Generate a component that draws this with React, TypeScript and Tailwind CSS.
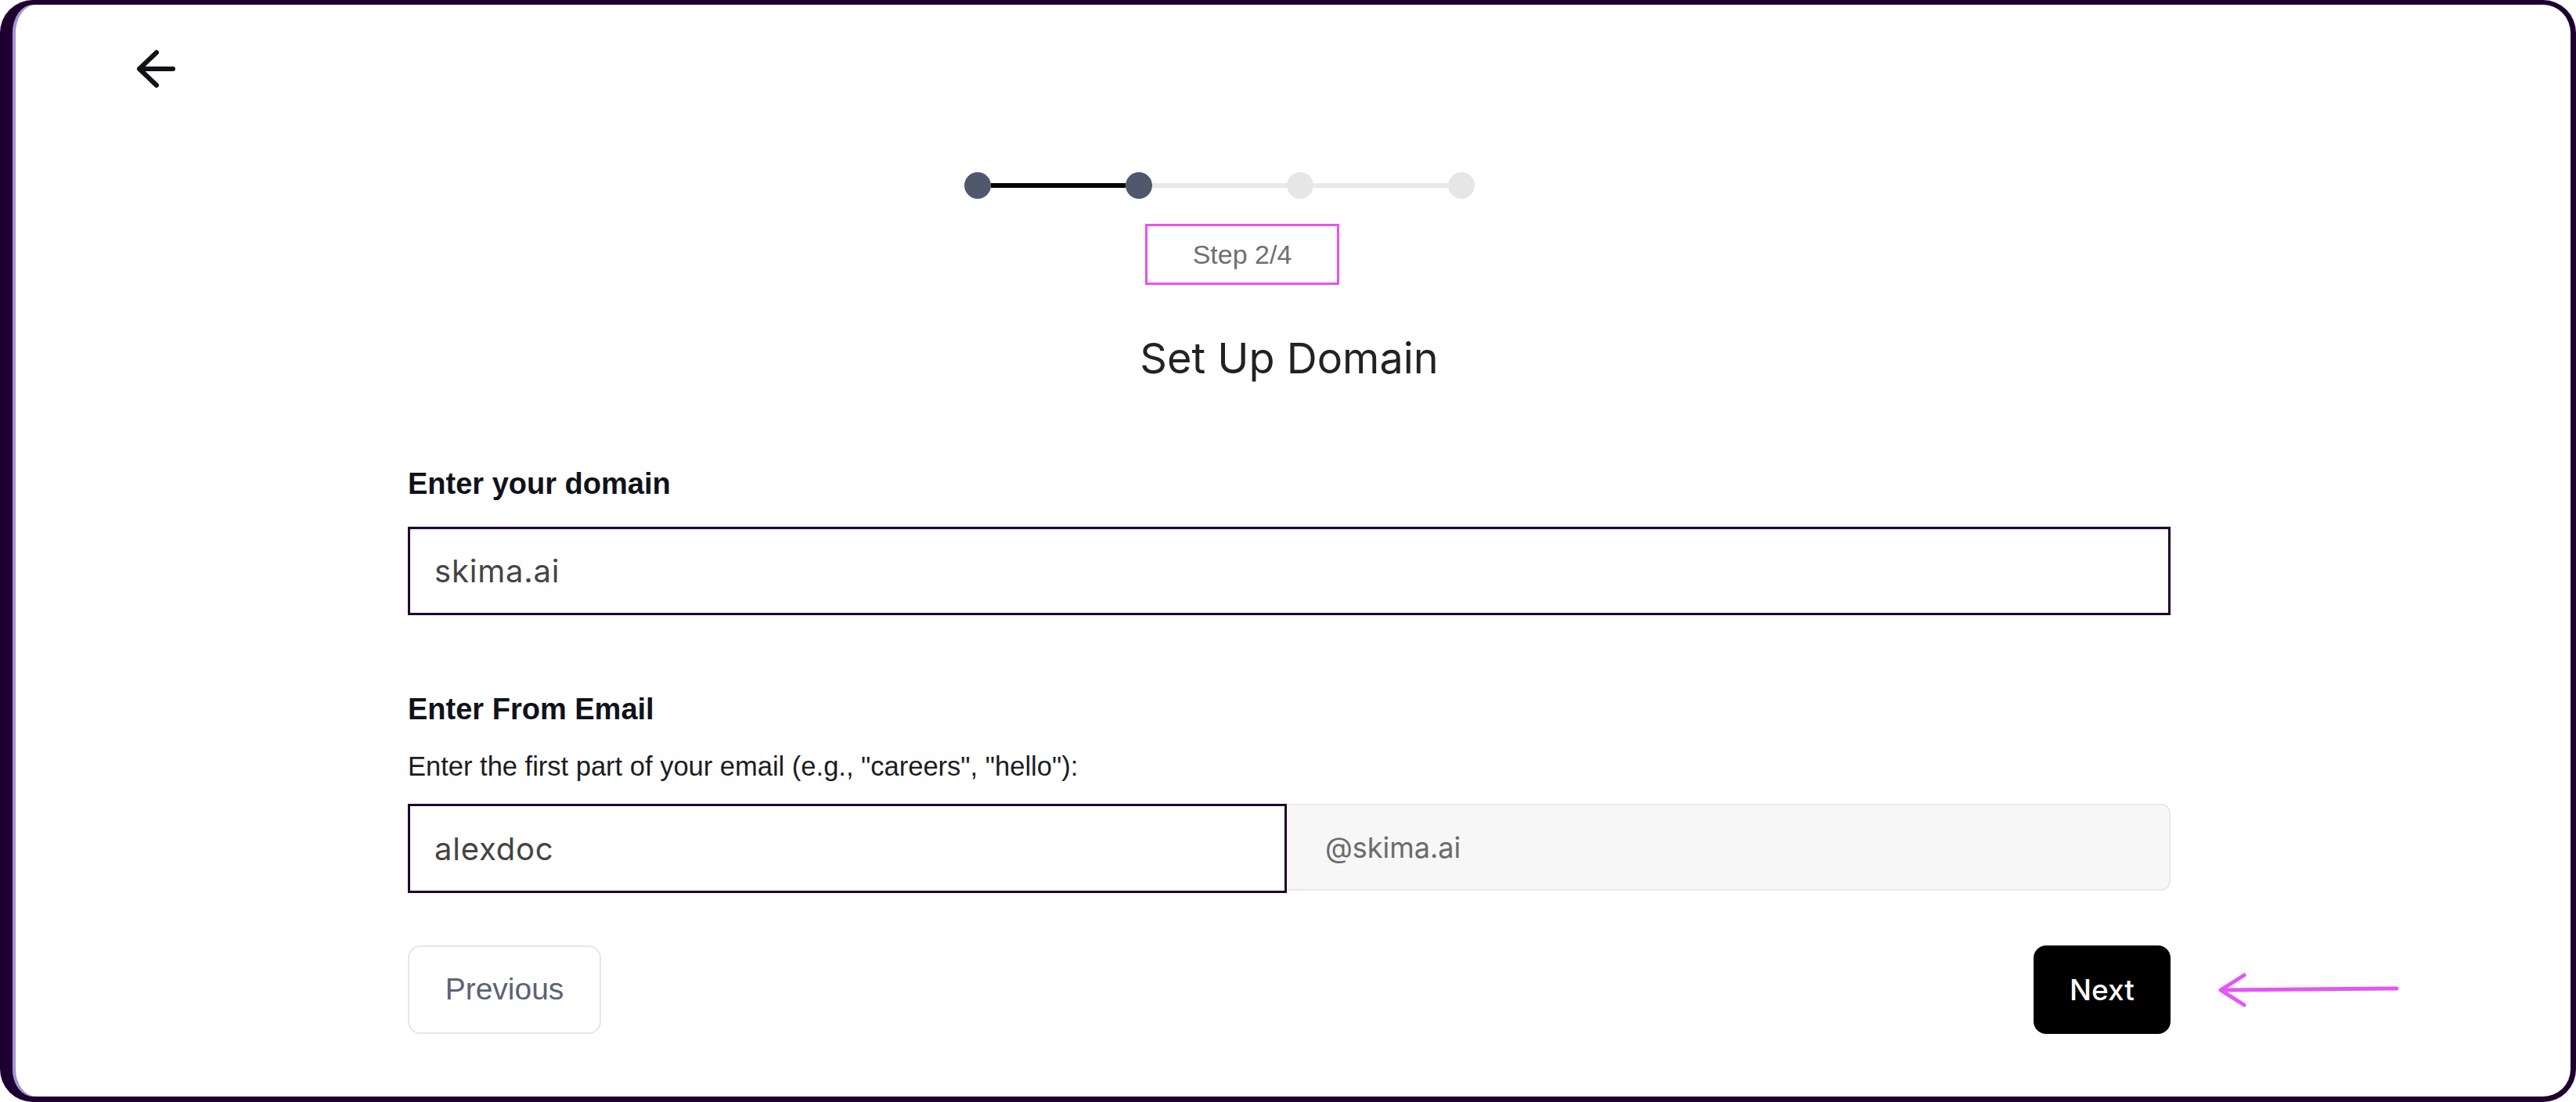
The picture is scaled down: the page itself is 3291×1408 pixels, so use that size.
import { useState } from "react"

const TOTAL_STEPS = 4
const CURRENT_STEP = 2

function BackArrow() {
  return (
    <svg width="54" height="52" viewBox="0 0 54 52" fill="none" aria-hidden="true">
      <path
        d="M28 5 L6 26 L28 47 M6 26 H49"
        stroke="#111318"
        strokeWidth="6"
        strokeLinecap="round"
        strokeLinejoin="round"
      />
    </svg>
  )
}

function PointerArrow() {
  return (
    <svg width="234" height="46" viewBox="0 0 234 46" fill="none" aria-hidden="true">
      <path
        d="M34 4 L4 23 L34 42 M4 23 L229 21"
        stroke="#e455f7"
        strokeWidth="5"
        strokeLinecap="round"
        strokeLinejoin="round"
      />
    </svg>
  )
}

function Stepper() {
  return (
    <div className="ml-[1216px] flex h-[34px] items-center">
      {Array.from({ length: TOTAL_STEPS }).map((_, i) => (
        <div key={i} className="flex items-center">
          <span
            className={
              i < CURRENT_STEP
                ? "h-[34px] w-[34px] rounded-full bg-[#4f586c]"
                : "h-[34px] w-[34px] rounded-full bg-[#e6e6e6]"
            }
          />
          {i < TOTAL_STEPS - 1 ? (
            <span
              className={
                i + 1 < CURRENT_STEP
                  ? "h-[6px] w-[172px] bg-black"
                  : "h-[6px] w-[172px] bg-[#e8e8e8]"
              }
            />
          ) : null}
        </div>
      ))}
    </div>
  )
}

export default function App() {
  const [domain, setDomain] = useState("skima.ai")
  const [prefix, setPrefix] = useState("alexdoc")

  return (
    <div className="h-screen w-full bg-white">
      <div className="box-border flex h-full w-full flex-col rounded-[42px] border-t-[6px] border-r-[7px] border-b-[7px] border-l-[16px] border-[#1e0030] bg-white shadow-[inset_4px_0_0_0_#a494d6]">
        <div className="h-[214px] pl-[156px] pt-[56px]">
          <button type="button" className="block">
            <BackArrow />
          </button>
        </div>

        <Stepper />

        <div className="ml-[1447px] mt-[32px] flex h-[78px] w-[248px] items-center justify-center border-[3px] border-[#eb4ff7] font-['Liberation_Sans',Arial,sans-serif] text-[34px] leading-none text-[#6f6f6f]">
          Step 2/4
        </div>

        <div className="ml-[505px] w-[2252px]">
          <h1 className="mt-[67px] h-[54px] text-center font-['Inter',sans-serif] text-[54px] font-normal leading-none text-[#222222]">
            Set Up Domain
          </h1>

          <label className="mt-[114px] block h-[38px] font-['Liberation_Sans',Arial,sans-serif] text-[38px] font-bold leading-none text-[#10121b]">
            Enter your domain
          </label>
          <input
            value={domain}
            onChange={(e) => setDomain(e.target.value)}
            className="mt-[36px] box-border block h-[113px] w-full border-[3px] border-[#1e0030] bg-white pl-[31px] font-['Inter',sans-serif] text-[40px] tracking-[0.02em] text-[#444444] outline-none shadow-[inset_0_2px_0_0_#eceef2]"
          />

          <label className="mt-[101px] block h-[38px] font-['Liberation_Sans',Arial,sans-serif] text-[38px] font-bold leading-none text-[#10121b]">
            Enter From Email
          </label>
          <p className="mt-[37px] h-[34px] font-['Liberation_Sans',Arial,sans-serif] text-[34.5px] leading-none text-[#1c1c22]">
            Enter the first part of your email (e.g., "careers", "hello"):
          </p>

          <div className="mt-[31px] flex h-[114px]">
            <input
              value={prefix}
              onChange={(e) => setPrefix(e.target.value)}
              className="box-border block h-full w-[1123px] border-[3px] border-[#1e0030] bg-white pl-[31px] font-['Inter',sans-serif] text-[40px] tracking-[0.02em] text-[#444444] outline-none"
            />
            <div className="box-border flex h-[111px] flex-1 items-center rounded-r-[12px] border-2 border-l-0 border-[#e8e8ec] bg-[#f7f7f7] pl-[49px] font-['Inter',sans-serif] text-[36px] text-[#6b6b6b]">
              @skima.ai
            </div>
          </div>

          <div className="relative mt-[67px] flex h-[113px] items-center justify-between">
            <button
              type="button"
              className="box-border h-full w-[247px] rounded-[16px] border-2 border-[#e4e6ea] bg-white font-['Liberation_Sans',Arial,sans-serif] text-[39px] text-[#5b6373]"
            >
              Previous
            </button>
            <button
              type="button"
              className="h-full w-[175px] rounded-[16px] bg-black font-['Inter',sans-serif] text-[37px] font-medium text-white"
            >
              Next
            </button>
            <div className="absolute left-[calc(100%+60px)] top-1/2 -translate-y-1/2">
              <PointerArrow />
            </div>
          </div>
        </div>
      </div>
    </div>
  )
}
